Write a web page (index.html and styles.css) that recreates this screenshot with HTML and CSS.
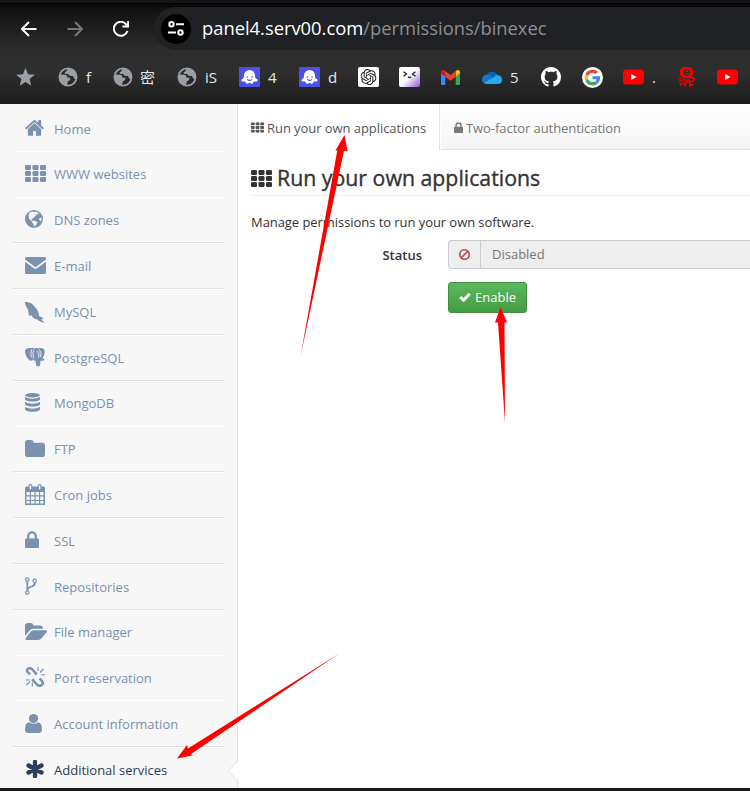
FILE: index.html
```
<!DOCTYPE html>
<html lang="en">
<head>
<meta charset="utf-8">
<title>Run your own applications</title>
<link rel="stylesheet" href="styles.css">
</head>
<body>
<svg class="defs" width="0" height="0">
  <defs>
    <symbol id="globe" viewBox="0 0 20 20"><circle cx="10" cy="10" r="8.600" fill="none" stroke="#9aa0a6" stroke-width="1.800"/><path d="M2 7.500l5.500.300q2 .5 1.800 2.600l2.800.4.200 2.300-2.600 1.400-.4 3.500Q4 18 1.500 12zM9.500 1.500L8.700 4l-2 1.200.3 1.600 3.200.3 1.500 1.700 3.200.2 1.500 2.700 2.200 1.200Q20.500 3 9.500 1.500z" fill="#9aa0a6"/></symbol>
    <symbol id="ghost" viewBox="0 0 21 20"><rect width="21" height="20" rx="1" fill="#4d50e6"/><path d="M10.500 3a5.500 5.500 0 0 0-5.500 5.500c0 2-.3 3-1.900 3.600-1.100.6-.8 2.400.8 2.500 1 .1 1.600-.2 2.100-.2.8 0 .6 2.300 2.400 2.300 1.200 0 1.300-.9 2.100-.9s.9.900 2.100.9c1.800 0 1.600-2.300 2.400-2.300.5 0 1.100.3 2.100.2 1.600-.1 1.900-1.900.8-2.500-1.600-.6-1.900-1.600-1.900-3.600A5.500 5.500 0 0 0 10.500 3z" fill="#fff"/><circle cx="8.300" cy="10" r=".8" fill="#4d50e6"/><circle cx="13" cy="10" r=".8" fill="#4d50e6"/><path d="M8.300 12.300q2.300 2.300 4.700 0" fill="none" stroke="#4d50e6" stroke-width="1.100"/></symbol>
    <symbol id="youtube" viewBox="0 0 21 16"><rect y=".5" width="21" height="15" rx="3.500" fill="#f00"/><path d="M8.200 5v6l5.300-3z" fill="#fff"/></symbol>
    <symbol id="grid" viewBox="0 0 21 17"><g fill="currentColor"><rect width="6" height="5" rx="1.200"/><rect x="7.500" width="6" height="5" rx="1.200"/><rect x="15" width="6" height="5" rx="1.200"/><rect y="6" width="6" height="5" rx="1.200"/><rect x="7.500" y="6" width="6" height="5" rx="1.200"/><rect x="15" y="6" width="6" height="5" rx="1.200"/><rect y="12" width="6" height="5" rx="1.200"/><rect x="7.500" y="12" width="6" height="5" rx="1.200"/><rect x="15" y="12" width="6" height="5" rx="1.200"/></g></symbol>
    <symbol id="lock" viewBox="0 0 14 17"><path d="M3.200 8V5.200a3.800 3.800 0 0 1 7.600 0V8" fill="none" stroke="currentColor" stroke-width="2.200"/><rect y="7.500" width="14" height="9.500" rx="1" fill="currentColor"/></symbol>
    <linearGradient id="kawaii" x1="0" y1="0" x2="1" y2="1"><stop offset=".5" stop-color="#fff"/><stop offset="1" stop-color="#8e4fd8"/></linearGradient>
  </defs>
</svg>

<header class="browser">
  <div class="toolbar">
    <svg class="nav-icon back" viewBox="0 0 16 16"><path d="M15.500 8H1.500M8 1L1 8l7 7"/></svg>
    <svg class="nav-icon forward" viewBox="0 0 16 16"><path d="M.5 8h14M8 1l7 7-7 7"/></svg>
    <svg class="nav-icon reload" viewBox="0 0 16 16"><path d="M14.500 10A7 7 0 1 1 13.200 3.300L15 5.200M15.200 0v5.500H9.500"/></svg>
    <div class="address">
      <span class="site-info"><svg width="16" height="15" viewBox="0 0 16 15" fill="none" stroke="#fff" stroke-width="2"><circle cx="3.500" cy="3.200" r="2.200"/><path d="M8 3.200h8M0 11.500h8"/><circle cx="12.500" cy="11.500" r="2.200"/></svg></span>
      <span class="url">panel4.serv00.com<span class="path">/permissions/binexec</span></span>
    </div>
  </div>
  <nav class="bookmarks">
    <span class="bm"><svg width="19" height="18" viewBox="0 0 20 19"><path fill="#9aa0a6" d="M10 0l2.700 6.600 7.100.5-5.500 4.600 1.800 7L10 14.900l-6.100 3.800 1.800-7L.2 7.100l7.100-.5z"/></svg></span>
    <span class="bm"><svg width="20" height="20"><use href="#globe"/></svg><span>f</span></span>
    <span class="bm cjk"><svg width="20" height="20"><use href="#globe"/></svg><span>密</span></span>
    <span class="bm"><svg width="20" height="20"><use href="#globe"/></svg><span>iS</span></span>
    <span class="bm"><svg width="21" height="20"><use href="#ghost"/></svg><span>4</span></span>
    <span class="bm"><svg width="21" height="20"><use href="#ghost"/></svg><span>d</span></span>
    <span class="bm"><svg width="21" height="20" viewBox="0 0 21 20"><rect width="21" height="20" rx="2" fill="#fff"/><svg x="2.500" y="2" width="16" height="16" viewBox="0 0 24 24"><path fill="#222" d="M22.2819 9.8211a5.9847 5.9847 0 0 0-.5157-4.9108 6.0462 6.0462 0 0 0-6.5098-2.9A6.0651 6.0651 0 0 0 4.9807 4.1818a5.9847 5.9847 0 0 0-3.9977 2.9 6.0462 6.0462 0 0 0 .7427 7.0966 5.98 5.98 0 0 0 .511 4.9107 6.051 6.051 0 0 0 6.5146 2.9001A5.9847 5.9847 0 0 0 13.2599 24a6.0557 6.0557 0 0 0 5.7718-4.2058 5.9894 5.9894 0 0 0 3.9977-2.9001 6.0557 6.0557 0 0 0-.7475-7.0729zm-9.022 12.6081a4.4755 4.4755 0 0 1-2.8764-1.0408l.1419-.0804 4.7783-2.7582a.7948.7948 0 0 0 .3927-.6813v-6.7369l2.02 1.1686a.071.071 0 0 1 .038.052v5.5826a4.504 4.504 0 0 1-4.4945 4.4944zm-9.6607-4.1254a4.4708 4.4708 0 0 1-.5346-3.0137l.142.0852 4.783 2.7582a.7712.7712 0 0 0 .7806 0l5.8428-3.3685v2.3324a.0804.0804 0 0 1-.0332.0615L9.74 19.9502a4.4992 4.4992 0 0 1-6.1408-1.6464zM2.3408 7.8956a4.485 4.485 0 0 1 2.3655-1.9728V11.6a.7664.7664 0 0 0 .3879.6765l5.8144 3.3543-2.0201 1.1685a.0757.0757 0 0 1-.071 0l-4.8303-2.7865A4.504 4.504 0 0 1 2.3408 7.872zm16.5963 3.8558L13.1038 8.364 15.1192 7.2a.0757.0757 0 0 1 .071 0l4.8303 2.7913a4.4944 4.4944 0 0 1-.6765 8.1042v-5.6772a.79.79 0 0 0-.407-.667zm2.0107-3.0231l-.142-.0852-4.7735-2.7818a.7759.7759 0 0 0-.7854 0L9.409 9.2297V6.8974a.0662.0662 0 0 1 .0284-.0615l4.8303-2.7866a4.4992 4.4992 0 0 1 6.6802 4.66zM8.3065 12.863l-2.02-1.1638a.0804.0804 0 0 1-.038-.0567V6.0742a4.4992 4.4992 0 0 1 7.3757-3.4537l-.142.0805L8.704 5.459a.7948.7948 0 0 0-.3927.6813zm1.0976-2.3654l2.602-1.4998 2.6069 1.4998v2.9994l-2.5974 1.4997-2.6067-1.4997Z"/></svg></svg></span>
    <span class="bm"><svg width="21" height="20" viewBox="0 0 21 20"><rect width="21" height="20" rx="2" fill="url(#kawaii)"/><path d="M4.500 4.800L7.500 7l-3 2.200M16.500 4.800L13.500 7l3 2.200M9 9.800q1.500 1.500 3 0" fill="none" stroke="#222" stroke-width="1.300"/></svg></span>
    <span class="bm"><svg width="19" height="15" viewBox="0 0 19 15"><path fill="#4285f4" d="M0 3v10.700Q0 15 1.300 15h3V6z"/><path fill="#34a853" d="M19 3v10.700q0 1.300-1.300 1.300h-3V6z"/><path fill="#c5221f" d="M0 3.500V2Q.2.100 2 0q1.200 0 2.300 1.100v5.600L0 3.500z"/><path fill="#fbbc04" d="M19 3.500V2Q18.800.1 17 0q-1.200 0-2.300 1.100v5.600z"/><path fill="#ea4335" d="M4.300 1.100l5.200 4 5.200-4v5.600l-5.200 4-5.200-4z"/></svg></span>
    <span class="bm"><svg width="20" height="13" viewBox="0 0 20 13"><path d="M4.500 4.500A6 6 0 0 1 15.500 4l-3 5z" fill="#0864b8"/><path d="M5 3.500A5 5 0 0 0 1.500 12l11-4.500L8 4Q6.500 3.300 5 3.500z" fill="#1179d0"/><path d="M15 4q5 .2 5 5.200-.1 3.800-4 3.800H4.800Q2.800 13 1.500 12L12 6q1.500-2 3-2z" fill="#28a8ea"/></svg><span>5</span></span>
    <span class="bm"><svg width="20" height="20" viewBox="0 0 16 16"><path fill="#fff" d="M8 0C3.580 0 0 3.580 0 8c0 3.540 2.290 6.530 5.470 7.590.4.070.55-.17.55-.38 0-.19-.01-.82-.01-1.490-2.010.37-2.530-.49-2.690-.94-.09-.23-.48-.94-.82-1.130-.28-.15-.68-.52-.01-.53.63-.01 1.080.58 1.230.82.72 1.210 1.870.87 2.330.66.07-.52.28-.87.51-1.070-1.780-.2-3.640-.89-3.640-3.950 0-.87.31-1.590.82-2.150-.08-.2-.36-1.020.08-2.120 0 0 .67-.21 2.200.82.64-.18 1.320-.27 2-.27s1.360.09 2 .27c1.530-1.040 2.200-.82 2.200-.82.44 1.100.16 1.920.08 2.120.51.56.82 1.270.82 2.150 0 3.070-1.870 3.750-3.650 3.950.29.25.54.73.54 1.480 0 1.070-.01 1.930-.01 2.200 0 .21.15.46.55.38A8.010 8.010 0 0 0 16 8c0-4.420-3.580-8-8-8z"/></svg></span>
    <span class="bm"><svg width="21" height="21" viewBox="0 0 64 64"><circle cx="32" cy="32" r="32" fill="#fff"/><g transform="translate(8 8)"><path fill="#ea4335" d="M24 9.500c3.540 0 6.710 1.220 9.210 3.600l6.850-6.850C35.900 2.380 30.470 0 24 0 14.620 0 6.510 5.380 2.560 13.220l7.980 6.190C12.430 13.720 17.740 9.500 24 9.500z"/><path fill="#4285f4" d="M46.980 24.550c0-1.570-.15-3.090-.38-4.550H24v9.020h12.940c-.58 2.960-2.260 5.480-4.780 7.180l7.730 6c4.510-4.180 7.090-10.360 7.090-17.650z"/><path fill="#fbbc05" d="M10.530 28.590c-.48-1.450-.76-2.990-.76-4.590s.27-3.140.76-4.590l-7.980-6.190C.92 16.460 0 20.120 0 24c0 3.880.92 7.540 2.560 10.780l7.970-6.190z"/><path fill="#34a853" d="M24 48c6.480 0 11.930-2.130 15.890-5.810l-7.730-6c-2.150 1.450-4.920 2.300-8.160 2.300-6.260 0-11.570-4.220-13.470-9.910l-7.980 6.190C6.510 42.620 14.620 48 24 48z"/></g></svg></span>
    <span class="bm"><svg width="21" height="16"><use href="#youtube"/></svg><span>.</span></span>
    <span class="bm"><svg width="19" height="20" viewBox="0 0 19 20"><g transform="translate(1 0)"><path fill="#f20000" d="M5 0h7.500L15 2.500v5.500L12.500 11H5L2 8V3z"/><path d="M6.500 5.500H11V3.500q-2.300-1.500-4.500 0-.8 2 .3 3.700 2 1.200 4.500 0" fill="none" stroke="#262626" stroke-width="1.100"/><path d="M3.500 11.500H.5M6 11.500Q5 14 1 14.500M7.500 12q-.5 5-5 5v2M9.500 12.500Q9 17 6.500 18v1.500M10 12l2 3 3-1 1.500-2-2-1.500-2 1M10.500 15.500l2.500 2h2.500M11 18l2 1.500" fill="none" stroke="#f20000" stroke-width="1.500"/></g></svg></span>
    <span class="bm"><svg width="21" height="16"><use href="#youtube"/></svg></span>
  </nav>
</header>

<div class="page">
  <aside class="sidebar">
    <ul class="menu">
      <li class="soft"><span class="ico"><svg width="19" height="17" viewBox="70 180 1650 1370" preserveAspectRatio="none"><path fill="currentColor" d="M1472 992v480q0 26-19 45t-45 19h-384v-384h-256v384h-384q-26 0-45-19t-19-45v-480q0-1 .5-3t.5-3l575-474 575 474q1 2 1 6zm223-69l-62 74q-8 9-21 11h-3q-13 0-21-7l-692-577-692 577q-12 8-24 7-13-2-21-11l-62-74q-8-10-7-23.500t11-21.500l719-599q32-26 76-26t76 26l244 204v-195q0-14 9-23t23-9h192q14 0 23 9t9 23v408l219 182q10 8 11 21.500t-7 23.500z"/></svg></span>Home</li>
      <li class="soft"><span class="ico"><svg width="21" height="17"><use href="#grid"/></svg></span>WWW websites</li>
      <li><span class="ico"><svg width="18" height="18" viewBox="0 0 18 18"><circle cx="9" cy="9" r="9" fill="currentColor"/><path fill="#f7f7f7" d="M4.500 2.500l2.800-.9 2 .7 1-.7 2.500.6 1.200 2-2.200-.3-.7 1.300-1.600 1.600-1.600 1.600-1.700.8 1.200 1.200-.2 1-3.200-2.600-.4-3.400zM7.500 10.700l2 .1 3.200 1.500-1.700 2.600-1.800 1.700-.7-2.400-1.400-1.800zM14.300 8.300l2.200-.9v2.500l-1 1.600-1.200-1.700z"/></svg></span>DNS zones</li>
      <li><span class="ico mid"><svg width="21" height="17" viewBox="0 0 21 17"><path fill="currentColor" d="M1.500 0h18Q21 0 21 1.500v1L10.500 10.200 0 2.500v-1Q0 0 1.500 0zM0 4.700l9.300 6.800q1.200.8 2.400 0L21 4.700v10.800q0 1.500-1.500 1.500h-18Q0 17 0 15.500z"/></svg></span>E-mail</li>
      <li><span class="ico low"><svg width="20" height="21" viewBox="0 0 20 21"><path fill="currentColor" d="M0 0Q6-.5 9 4q4.500 4 5.300 10.300 3.700 1.200 4.200 2.500l-2.300.7 3.800 3.200q-5-.7-8-3.200-4.500-1-5.700-4.500l-1.500 1.300Q3 12 3.300 8.500L0 2z"/></svg></span>MySQL</li>
      <li><span class="ico mid"><svg width="20" height="19" viewBox="0 0 20 19"><path fill="currentColor" d="M4 0Q7-.5 9 .7q2-1 4-.3Q17-.7 19.200 1.400q1.500 3.500-1.700 9l2.300.6q-1.300 2.400-4.300 1.700l-.5 4.800q-1.800 2-4-.1l-.5-5.200q-2 1.500-2.200-1-1.500 2-3.300 1.300Q1 10 0 4-.2.300 4 0z"/><path d="M6.800 1.200Q5.300 5 6.300 9.500M9 2Q7 5 8.500 8.500l-.5 2M14 1.500q3.500 3 1.500 7.500M11.500 4q1.800-1 2.300.3v5.500" fill="none" stroke="#f7f7f7" stroke-width=".85"/></svg></span>PostgreSQL</li>
      <li class="soft"><span class="ico"><svg width="15" height="19" viewBox="0 0 15 19"><g fill="currentColor"><ellipse cx="7.500" cy="2.200" rx="7.500" ry="2.200"/><path d="M0 4q7.500 3.300 15 0v2.500q-1.500 2-7.500 2T0 6.500zM0 9q7.500 3.300 15 0v2.500q-1.500 2-7.500 2T0 11.500zM0 14q7.500 3.300 15 0v2.500q-1.500 2.300-7.500 2.300T0 16.500z"/></g></svg></span>MongoDB</li>
      <li><span class="ico"><svg width="20" height="17" viewBox="0 0 20 17"><path fill="currentColor" d="M2.500 0H6q2.500 0 2.500 2.700h8.700Q20 2.700 20 5.500v8.700q0 2.800-2.800 2.800H2.800Q0 17 0 14.200V2.500Q0 0 2.500 0z"/></svg></span>FTP</li>
      <li><span class="ico"><svg width="20" height="21" viewBox="0 0 20 21"><path fill="currentColor" d="M1.500 2.500h17Q20 2.500 20 4v17H0V4q0-1.500 1.500-1.500z"/><g fill="#f7f7f7"><path d="M1.500 8h3.300v3.300H1.500zM6 8h3.500v3.300H6zM10.600 8H14v3.300h-3.400zM15.200 8h3.300v3.300h-3.300zM1.500 12.400h3.300V16H1.500zM6 12.400h3.500V16H6zM10.600 12.400H14V16h-3.400zM15.200 12.400h3.300V16h-3.300zM1.500 17.100h3.300v2.500H1.500zM6 17.100h3.500v2.500H6zM10.600 17.100H14v2.500h-3.400zM15.200 17.100h3.300v2.500h-3.300z"/></g><rect x="4" y=".6" width="2.800" height="5.400" rx="1.300" fill="#f7f7f7" stroke="currentColor" stroke-width="1.200"/><rect x="13.200" y=".6" width="2.800" height="5.400" rx="1.300" fill="#f7f7f7" stroke="currentColor" stroke-width="1.200"/></svg></span>Cron jobs</li>
      <li><span class="ico"><svg width="14" height="17"><use href="#lock"/></svg></span>SSL</li>
      <li><span class="ico"><svg width="12" height="18" viewBox="0 0 12 18" fill="none" stroke="currentColor"><g stroke-width="1.200"><circle cx="2.300" cy="2.500" r="1.700"/><circle cx="9.700" cy="3.800" r="1.700"/><circle cx="2.300" cy="15.500" r="1.700"/></g><path d="M2.300 4.200v9.600M9.700 5.500Q10 8.500 6.500 9.500 2.500 10.600 2.300 13" stroke-width="1.800"/></svg></span>Repositories</li>
      <li class="soft"><span class="ico"><svg width="22" height="17" viewBox="0 0 22 17"><path fill="currentColor" d="M2.400 0h3.700q2 0 2.300 2.500h6.800q2.600 0 2.800 3.200H8.500Q5.800 5.800 4 8L0 13V2.500Q0 0 2.400 0zM8.300 7.300h12.600q1.800.2.700 1.900l-4.800 5.900Q15.200 17 13 17H1.500q-2-.2-.7-2L5.500 9q1.200-1.600 2.800-1.700z"/></svg></span>File manager</li>
      <li class="soft"><span class="ico"><svg width="20" height="20" viewBox="0 0 20 20" fill="none" stroke="currentColor"><path d="M4.600 7.200L2.300 5Q.5 2.800 2.500 1.600 4.800.2 6.500 2l4 4.300-1 1M8.500 12l-1 1.200 4.500 4.600q2.300 1.500 4.300 0t.3-3.800L14 11.500" stroke-width="2.500" transform="translate(.5 .2)"/><path d="M13 0v4M15 5.500L18.500 2M16 7.800h4M1 13h4M5 14.500L1.500 18M7.300 15.500v4" stroke-width="1.100"/></svg></span>Port reservation</li>
      <li><span class="ico"><svg width="17" height="19" viewBox="0 0 17 19"><g fill="currentColor"><circle cx="8.500" cy="4.600" r="4.600"/><path d="M4 8.200q4.500 3 9 0 4 .5 4 7Q17 19 13.500 19h-10Q0 19 0 15.200q0-6.500 4-7z"/></g></svg></span>Account information</li>
      <li class="active"><span class="ico"><svg width="20" height="18" viewBox="0 0 20 18"><path d="M10 1.800v14.400M3.500 5.500l13 7M16.500 5.500l-13 7" stroke="currentColor" stroke-width="4.300" stroke-linecap="round"/></svg></span>Additional services
        <svg class="notch" width="11" height="20" viewBox="0 0 11 20"><path d="M11 0L1 10l10 10" fill="#fff" stroke="#dbe3ec"/></svg></li>
    </ul>
  </aside>
  <main class="content">
    <div class="tabs">
      <div class="tab current"><svg width="13" height="11" viewBox="0 0 21 17"><use href="#grid"/></svg>Run your own applications</div>
      <div class="tab other"><svg width="9" height="11" viewBox="0 0 14 17"><use href="#lock"/></svg>Two-factor authentication</div>
    </div>
    <h1><svg width="21" height="17"><use href="#grid"/></svg>Run your own applications</h1>
    <p>Manage permissions to run your own software.</p>
    <div class="form">
      <label>Status</label>
      <div class="fields">
        <div class="group"><span class="addon"><svg width="11" height="11" viewBox="0 0 11 11" fill="none" stroke="#b04a47" stroke-width="1.600"><circle cx="5.500" cy="5.500" r="4.700"/><path d="M2.200 8.800l6.600-6.600"/></svg></span><span class="value">Disabled</span></div>
        <button><svg width="12" height="10" viewBox="0 0 12 10"><path d="M1.200 5l3.300 3.200L10.800 1.800" fill="none" stroke="#fff" stroke-width="3"/></svg>Enable</button>
      </div>
    </div>
  </main>
</div>
<div class="bottom-edge"></div>

<svg class="arrows" width="750" height="791" viewBox="0 0 750 791" fill="#f00">
  <path d="M344.500 135L347.500 151.300 344 150.700 300.500 356.500 337.300 150.200 335.300 150.700z"/>
  <path d="M500.500 307L507 322.500H504.500L505 422.500 498 322.500H495z"/>
  <path d="M177 758.500L187 745 188 748.500 340 653 191 754 193 755.300z"/>
</svg>
</body>
</html>
```
FILE: styles.css
```
* { box-sizing: border-box; }
body {
  margin: 0;
  width: 750px;
  height: 791px;
  overflow: hidden;
  position: relative;
  background: #fff;
  color: #333;
  font: 13px/20px "Open Sans", "Noto Sans", sans-serif;
}
svg { display: block; flex: none; }
.defs { position: absolute; }

.browser {
  height: 104px;
  border-top: 3px solid #151515;
  background: linear-gradient(#000 0, #000 1px, #171717 2px, #000 3px, #101010 4px, #2d2d2d 47px, #2e2e2e 70px, #1c1c1c 100px);
  color: #e8e8e8;
}
.toolbar { height: 47px; padding: 4px 0 0 21px; display: flex; align-items: center; }
.nav-icon { width: 16px; height: 16px; fill: none; stroke: #fff; stroke-width: 2; margin-right: 30px; }
.nav-icon.forward { stroke: #777; }
.nav-icon.reload { margin-right: 25px; }
.address {
  flex: 1;
  height: 43px;
  padding-left: 7px;
  display: flex;
  align-items: center;
  border-radius: 22px 0 0 22px;
  background: #202124;
}
.site-info { width: 30px; height: 30px; border-radius: 50%; background: #000; display: grid; place-items: center; }
.url { margin: -2px 0 0 11px; font-size: 18.350px; line-height: 24px; color: #fff; white-space: nowrap; }
.path { color: #8d8e90; }
.bookmarks {
  height: 54px;
  padding-left: 16px;
  display: grid;
  align-items: center;
  grid-template-columns: 42px 55px 64px 62px 60px 59px 41px 42px 41px 59px 41px 41px 54px 40px 33px;
  font: 15px/20px "Open Sans", "Noto Sans CJK SC", sans-serif;
}
.bm { display: flex; align-items: center; gap: 8px; white-space: nowrap; }
.bm.cjk { gap: 7px; }

.page { display: flex; height: 684px; }
.sidebar { width: 238px; padding: 2px 13px 0; background: #f7f7f7; border-right: 1px solid #dbe3ec; }
.menu { list-style: none; margin: 0; padding: 0; width: 211px; }
.menu li {
  position: relative;
  height: 45.8px;
  padding: .5px 0 0 12px;
  display: flex;
  align-items: center;
  border-bottom: 1px solid #e2e2e2;
  box-shadow: 0 1px #fff;
  color: #7a91b0;
}
.menu li.soft { border-bottom-color: #fff; box-shadow: none; }
.menu li.active { padding-top: 0; color: #2c3e5a; border: 0; box-shadow: none; }
.ico { width: 29px; padding-bottom: 2px; }
.ico.mid { padding-bottom: 1px; }
.ico.low { padding-bottom: 0; margin-bottom: -2px; }
.notch { position: absolute; left: 214px; top: 14px; }

.content { flex: 1; min-width: 0; }
.tabs { height: 46px; display: flex; }
.tab { display: flex; align-items: center; gap: 3px; padding: 2px 13px 0; color: #555; white-space: nowrap; letter-spacing: -.06px; }
.tab.current { width: 202px; border-right: 1px solid #dbe3ec; }
.tab svg { margin-top: -1px; }
.tab.other { flex: 1; padding-top: 3px; color: #777; border-bottom: 1px solid #e2e2e2; background: linear-gradient(#fff, #f5f5f5); margin-left: 1px; }
h1 {
  margin: 11px 0 0 13px;
  height: 35px;
  display: flex;
  align-items: center;
  gap: 5px;
  border-bottom: 1px solid #eee;
  font-size: 21.300px;
  line-height: 34px;
  font-weight: 400;
  -webkit-text-stroke: .35px currentColor;
}
p { margin: 16px 0 0 13px; letter-spacing: -.06px; }
.form { display: flex; margin-top: 8px; }
label { width: 184px; margin-right: 26px; padding-top: 5px; text-align: right; font-weight: 600; }
.fields { flex: 1; }
.group { height: 29px; display: flex; border: 1px solid #ccc; border-right: 0; border-radius: 4px 0 0 4px; background: #eee; color: #777; }
.addon { width: 32px; display: grid; place-items: center; border-right: 1px solid #ccc; }
.value { padding: 3px 11px; }
button {
  width: 79px;
  height: 31px;
  margin-top: 13px;
  padding: 0 0 1px;
  display: flex;
  align-items: center;
  justify-content: center;
  gap: 4px;
  border: 1px solid #3e8f3e;
  border-radius: 3px;
  background: linear-gradient(#5cb85c, #449d44);
  color: #fff;
  font: 13px/20px "Open Sans", sans-serif;
}
.bottom-edge { height: 3px; background: #1a1a1a; }
.arrows { position: absolute; left: 0; top: 0; pointer-events: none; }
```
